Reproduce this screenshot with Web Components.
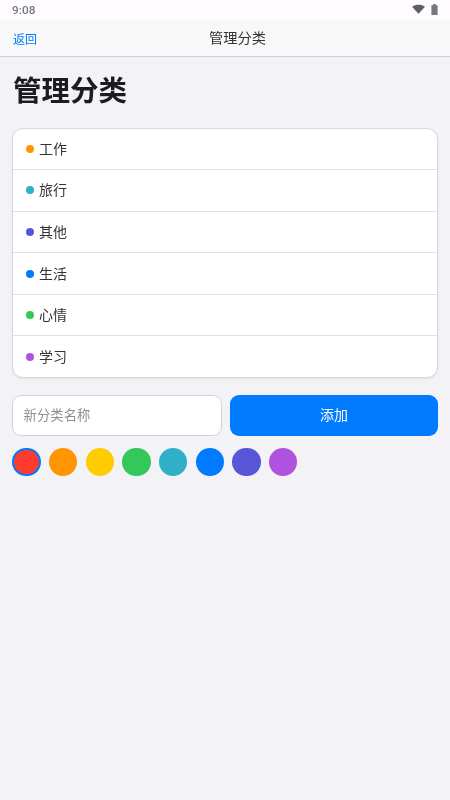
<!DOCTYPE html>
<html lang="zh"><head><meta charset="utf-8">
<style>
html,body{margin:0;height:100%;}
body{background:#f2f2f7;font-family:"Roboto","Noto Sans CJK SC",sans-serif;}
</style></head><body>
<app-screen>
<status-bar></status-bar>
<nav-bar title="管理分类" back="返回"></nav-bar>
<page-body>
<h1 slot="title">管理分类</h1>
<category-list slot="list">
<category-row color="#ff9500">工作</category-row>
<category-row color="#30b0c7">旅行</category-row>
<category-row color="#5856d6">其他</category-row>
<category-row color="#007aff">生活</category-row>
<category-row color="#34c759">心情</category-row>
<category-row color="#af52de" last>学习</category-row>
</category-list>
<add-form slot="form"></add-form>
<color-picker slot="colors"></color-picker>
</page-body>
</app-screen>
<script>
function def(name, css, html, init){
  customElements.define(name, class extends HTMLElement{
    constructor(){super();this.attachShadow({mode:'open'}).innerHTML='<style>'+css+'</style>'+html;}
    connectedCallback(){ if(init) init.call(this,this.shadowRoot); }
  });
}
def('app-screen',':host{display:flex;flex-direction:column;min-height:800px;will-change:transform}','<slot></slot>');
def('status-bar',`:host{display:flex;align-items:center;justify-content:space-between;height:20px;background:#fffcff;padding:0 12px 0 12px;box-sizing:border-box;font:500 11.8px Roboto,sans-serif;letter-spacing:.1px;color:#77777b}
.i{display:flex;align-items:center;gap:6px;margin-top:-2px}svg{display:block}`,
`<span>9:08</span><span class="i"><svg width="13" height="10" viewBox="0 0 13 10"><path d="M0 2.8C1.8 1.3 4 .7 6.5.7S11.2 1.3 13 2.8L6.5 9.8z" fill="#5f5f63"/></svg><svg width="7" height="11" viewBox="0 0 7 11"><path d="M2.2 0h2.6v1.2H6.6V11H.4V1.2h1.8z" fill="#77777b"/></svg></span>`);
def('nav-bar',`:host{height:37px;box-sizing:border-box;background:#f8f8f8;border-bottom:1px solid #cfcfd4;display:grid;grid-template-columns:13px 24px 1fr;font-family:Roboto,"Noto Sans CJK SC",sans-serif}
.t{grid-column:3;padding:8px 12px 0 0;text-align:center;font-size:14.2px;line-height:20px;color:#333;white-space:nowrap}
.b{grid-column:2;padding-top:11px;font-size:12px;line-height:18px;color:#007aff;white-space:nowrap}`,
`<span class="b"></span><span class="t"></span>`,function(r){r.querySelector('.t').textContent=this.getAttribute('title');r.querySelector('.b').textContent=this.getAttribute('back');});
def('page-body',`:host{display:flex;flex-direction:column;padding:17px 12px 0}
::slotted(h1){margin:0 0 0 1px;font:700 28.5px/36px Roboto,"Noto Sans CJK SC",sans-serif;color:#1c1c1e}
.t{display:block;margin-bottom:17.5px}.f{display:block;margin:17px 0 12.5px}`,
`<slot class="t" name="title"></slot><slot name="list"></slot><slot class="f" name="form"></slot><slot name="colors"></slot>`);
def('category-list',`:host{display:block;height:250px;box-sizing:border-box;background:#fff;border-radius:11px;border:1px solid #d9d9dd;box-shadow:0 1px 2px rgba(0,0,0,.08);overflow:hidden}`,'<slot></slot>');
def('category-row',`:host{display:flex;align-items:center;height:41.6px;box-sizing:border-box;padding-left:13px;border-bottom:1px solid #e2e2e5;font:14px/20px Roboto,"Noto Sans CJK SC",sans-serif;color:#333}
:host([last]){border-bottom:0}
i{width:8px;height:8px;border-radius:50%;margin-right:5px;flex:none}`,
`<i></i><slot></slot>`,function(r){r.querySelector('i').style.background=this.getAttribute('color');});
def('add-form',`:host{display:flex;gap:8px;height:41px}
.i{width:210px;flex:none;box-sizing:border-box;background:#fff;border:1px solid #d1d1d6;border-radius:9px;padding:1px 0 0 10.5px;display:flex;align-items:center;font:13.3px/20px Roboto,"Noto Sans CJK SC",sans-serif;color:#8e8e93;letter-spacing:.1px}
.b{flex:1;background:#007aff;border-radius:9px;display:flex;align-items:center;justify-content:center;color:#fff;font:14px/20px Roboto,"Noto Sans CJK SC",sans-serif}`,
`<div class="i">新分类名称</div><div class="b">添加</div>`);
def('color-picker',`:host{display:flex;gap:8.33px;padding-left:.33px}
i{width:28.33px;height:28.33px;border-radius:50%;box-sizing:border-box;flex:none}
i.s{border:2px solid #007aff}`,
['#ff3b30','#ff9500','#ffcc00','#34c759','#30b0c7','#007aff','#5856d6','#af52de'].map((c,n)=>`<i class="${n?'':'s'}" style="background:${c}"></i>`).join(''));
</script>
</body></html>
